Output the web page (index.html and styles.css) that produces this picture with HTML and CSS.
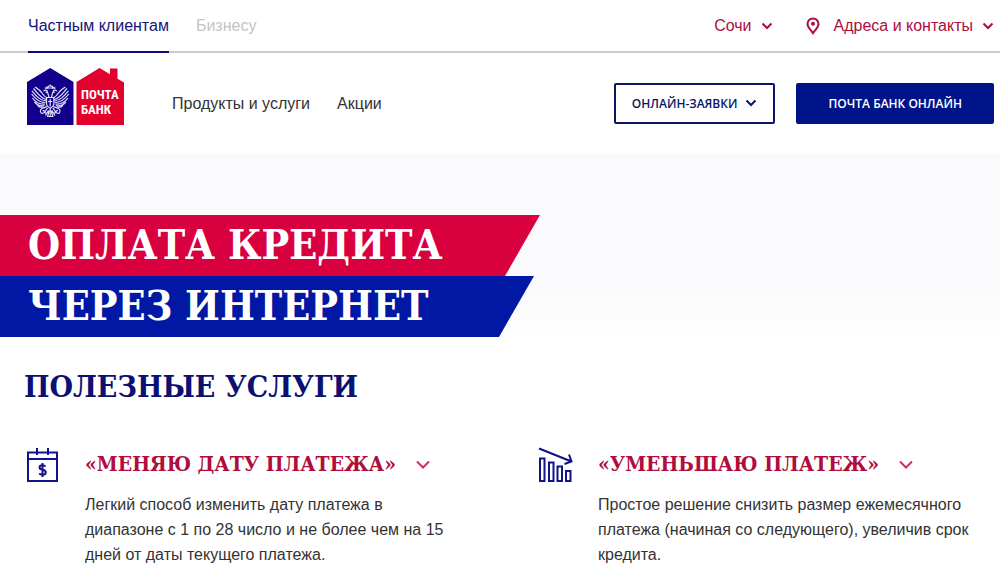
FILE: index.html
```html
<!DOCTYPE html>
<html lang="ru">

<head>
    <meta charset="UTF-8">
    <meta name="viewport" content="width=device-width, initial-scale=1.0">
    <title>Почта Банк</title>

    <link rel="stylesheet" href="styles.css">
</head>

<body>
    <div class="topbar">
        <nav class="tabs">
            <a class="tab current" href="#">Частным клиентам</a>
            <a class="tab" href="#">Бизнесу</a>
        </nav>
        <div class="contacts">
            <button class="drop" type="button">Сочи
                <svg class="arrow" viewBox="0 0 12 8"><path d="M1.5 1.5 6 6l4.500-4.500"/></svg>
            </button>
            <button class="drop" type="button">
                <svg class="pin" viewBox="0 0 14 18"><path d="M7 16.200C4.500 12.700 1.500 9.800 1.500 6.900a5.500 5.500 0 0 1 11 0C12.500 9.800 9.500 12.700 7 16.200z"/><circle cx="7" cy="6.800" r="2"/></svg>
                Адреса и контакты
                <svg class="arrow" viewBox="0 0 12 8"><path d="M1.500 1.500 6 6l4.500-4.500"/></svg>
            </button>
        </div>
    </div>

    <header class="header">
        <a class="logo" href="#" aria-label="Почта Банк">
            <svg viewBox="0 0 97 57">
                <path fill="#12008c" d="M0 14 23.200 0 46.500 14V57H0z"/>
                <path fill="#e2002d" d="M49.500 14 72.500 0 83 6.300V.5h7.500v10.200l6.500 3.800V57H49.500z"/>
                <!-- орёл: правая половина зеркалит левую -->
                <defs>
                    <g id="half">
                        <path d="M20.500 30C18 29 16 27 14.500 24.500 13 22 10.500 20.500 8 19"/>
                        <path d="M19.500 31.500C14 30.500 11 25.500 6.500 20.500"/>
                        <path d="M19 33C12 32 9 27.500 5 22.800"/>
                        <path d="M18.500 34.500C12 34.500 8 30.500 4.600 26"/>
                        <path d="M18 36C12.500 36.500 8 33.800 5.500 30"/>
                        <path d="M17.500 37.500C13.500 38.500 10 37 7.500 34"/>
                        <path d="M16.500 38.800C14.500 39.500 12 39 10.500 37.500"/>
                        <path d="M21.800 30C22 27 20.500 25 20.300 23.500 20 21.800 18.500 21.600 16.500 23M18.500 24.200 20.500 24.500M17.800 20.200h3.500M19.500 18.700v2"/>
                        <path d="M20 38.500C17.500 40 15 39.500 13.800 41.500c-1.500 2.500.7 4.500 2.700 3.500 2-1 .5-3-1-2.200M20.500 40c-1 2-3 3-2.500 4.500.5 1.300 2.500.5 3.500-.8M21.500 42.500 18.500 47.500M22.500 42.500 20.500 48.500"/>
                    </g>
                </defs>
                <g class="eagle">
                    <use href="#half"/>
                    <use href="#half" transform="matrix(-1 0 0 1 46.400 0)"/>
                    <path d="M19.500 29.500h7.400v6.500c0 2.500-2.200 3.500-3.700 4.500-1.500-1-3.700-2-3.700-4.500zM23.200 31v7.500M21 33.500h4.400M23.200 41v8M20 48.500h6.400M20.800 20v-1c0-1.500 4.800-1.500 4.800 0v1zM23.200 16.500v2"/>
                </g>
                <text class="logo-text" x="54" y="31">ПОЧТА</text>
                <text class="logo-text" x="54" y="46">БАНК</text>
            </svg>
        </a>
        <nav class="menu">
            <a href="#">Продукты и услуги</a>
            <a href="#">Акции</a>
        </nav>
        <div class="actions">
            <button class="btn" type="button">ОНЛАЙН-ЗАЯВКИ
                <svg class="arrow" viewBox="0 0 12 8"><path d="M1.500 1.500 6 6l4.500-4.500"/></svg>
            </button>
            <button class="btn btn-fill" type="button">ПОЧТА БАНК ОНЛАЙН</button>
        </div>
    </header>

    <div class="banner">
        <h1>
            <span class="ribbon red">ОПЛАТА КРЕДИТА</span>
            <span class="ribbon blue">ЧЕРЕЗ ИНТЕРНЕТ</span>
        </h1>
    </div>

    <main class="services">
        <h2>ПОЛЕЗНЫЕ УСЛУГИ</h2>
        <div class="list">
            <section class="item">
                <svg class="icon" viewBox="0 0 36 36">
                    <path d="M4 5.500h29V34H4zM4 12h29M13 1v7M24 1v7"/>
                    <path d="M21.500 19.500c-.8-1-1.800-1.300-3-1.300-4 0-4 4.200 0 4.600 4.500.5 4.200 5 0 5-1.300 0-2.500-.4-3.300-1.400M18.500 16v14"/>
                </svg>
                <div class="text">
                    <h3><button class="toggle" type="button">«МЕНЯЮ ДАТУ ПЛАТЕЖА»
                        <svg class="arrow-big" viewBox="0 0 14 9"><path d="M1 1.500 7 7.500l6-6"/></svg></button></h3>
                    <p>Легкий способ изменить дату платежа в диапазоне с 1 по 28 число и не более чем на 15 дней от даты текущего платежа.</p>
                </div>
            </section>
            <section class="item">
                <svg class="icon" viewBox="0 0 36 36">
                    <path d="M2 1.500 34.500 14.500M32 7.500l2.500 7-7 2.500M3 11.500h4.500V34H3zM12 15.500h4.500V34H12zM20.500 19.500H25V34h-4.500zM29 24h4.500v10H29z"/>
                </svg>
                <div class="text">
                    <h3><button class="toggle" type="button">«УМЕНЬШАЮ ПЛАТЕЖ»
                        <svg class="arrow-big" viewBox="0 0 14 9"><path d="M1 1.500 7 7.500l6-6"/></svg></button></h3>
                    <p>Простое решение снизить размер ежемесячного платежа (начиная со следующего), увеличив срок кредита.</p>
                </div>
            </section>
        </div>
    </main>
</body>

</html>
```
FILE: styles.css
```css
* {
    padding: 0;
    margin: 0;
    box-sizing: border-box;
}

body {
    font: 16px/25px "Liberation Sans", Arial, sans-serif;
    color: #333;
    background-color: #fff;
}

a {
    color: inherit;
    text-decoration: none;
}

button {
    font: inherit;
    color: inherit;
    background: none;
    border: none;
    cursor: pointer;
}

svg {
    flex: none;
    fill: none;
    stroke: currentColor;
}

.topbar {
    display: flex;
    justify-content: space-between;
    height: 53px;
    padding: 0 6px 0 28px;
    border-bottom: 2px solid #ccc;
}

.tabs {
    display: flex;
    gap: 27px;
}

.tab {
    height: 53px;
    line-height: 52px;
    color: #c4c4c6;
}

.tab.current {
    color: #12157a;
    border-bottom: 2px solid #0c0c7c;
}

.contacts {
    display: flex;
    gap: 33px;
    color: #ab0d3f;
}

.drop {
    display: flex;
    align-items: center;
    gap: 9px;
}

.arrow {
    width: 12px;
    height: 8px;
    stroke-width: 2;
}

.pin {
    width: 14px;
    height: 18px;
    margin-right: 5px;
    stroke-width: 2;
}

.pin circle {
    fill: currentColor;
    stroke: none;
}

.header {
    display: flex;
    align-items: center;
    height: 100px;
    padding: 0 6px 0 27px;
}

.logo {
    align-self: flex-start;
    padding-top: 15px;
}

.logo svg {
    display: block;
    width: 97px;
    height: 57px;
    stroke: none;
}

.logo-text {
    font: bold 13px "Roboto Condensed", Roboto, sans-serif;
    fill: #fff;
}

.logo .eagle {
    stroke: #e2e0f8;
    stroke-width: 1.2;
}

.menu {
    display: flex;
    gap: 27px;
    margin-left: 48px;
}

.actions {
    display: flex;
    gap: 21px;
    margin-left: auto;
}

.btn {
    display: flex;
    align-items: center;
    justify-content: center;
    gap: 8px;
    height: 41px;
    padding: 0 16px;
    font: 600 12px "Open Sans", sans-serif;
    color: #0b1766;
    border: 2px solid #0b1766;
    border-radius: 2px;
}

.btn-fill {
    padding: 0 30px;
    color: #fff;
    background-color: #001489;
    border-color: #001489;
}

.banner {
    padding-top: 62px;
    background: linear-gradient(#fafafc 70%, #fefefe);
}

.ribbon {
    display: block;
    max-width: 100%;
    height: 61px;
    padding-left: 28px;
    font: bold 41px/60px "DejaVu Serif Condensed", "DejaVu Serif", serif;
    color: #fff;
    white-space: nowrap;
    clip-path: polygon(0 0, 100% 0, calc(100% - 35px) 100%, 0 100%);
}

.red {
    width: 540px;
    background-color: #d90040;
}

.blue {
    width: 534px;
    background-color: #0018a4;
}

.services {
    padding: 30px 6px 16px 24px;
}

h2 {
    font: bold 30px/40px "DejaVu Serif Condensed", "DejaVu Serif", serif;
    color: #0a1172;
}

.list {
    display: grid;
    grid-template-columns: 1fr 1fr;
    gap: 56px;
    margin-top: 40px;
}

.item {
    display: flex;
    gap: 25px;
}

.icon {
    width: 36px;
    height: 36px;
    color: #12128a;
    stroke-width: 2;
}

.toggle {
    display: flex;
    align-items: center;
    gap: 20px;
    font: bold 21px/34px "DejaVu Serif Condensed", "DejaVu Serif", serif;
    color: #b00c3c;
    white-space: nowrap;
}

.arrow-big {
    width: 14px;
    height: 9px;
    color: #d22d5c;
    stroke-width: 2;
}

.item p {
    max-width: 376px;
    margin-top: 11px;
}
```
